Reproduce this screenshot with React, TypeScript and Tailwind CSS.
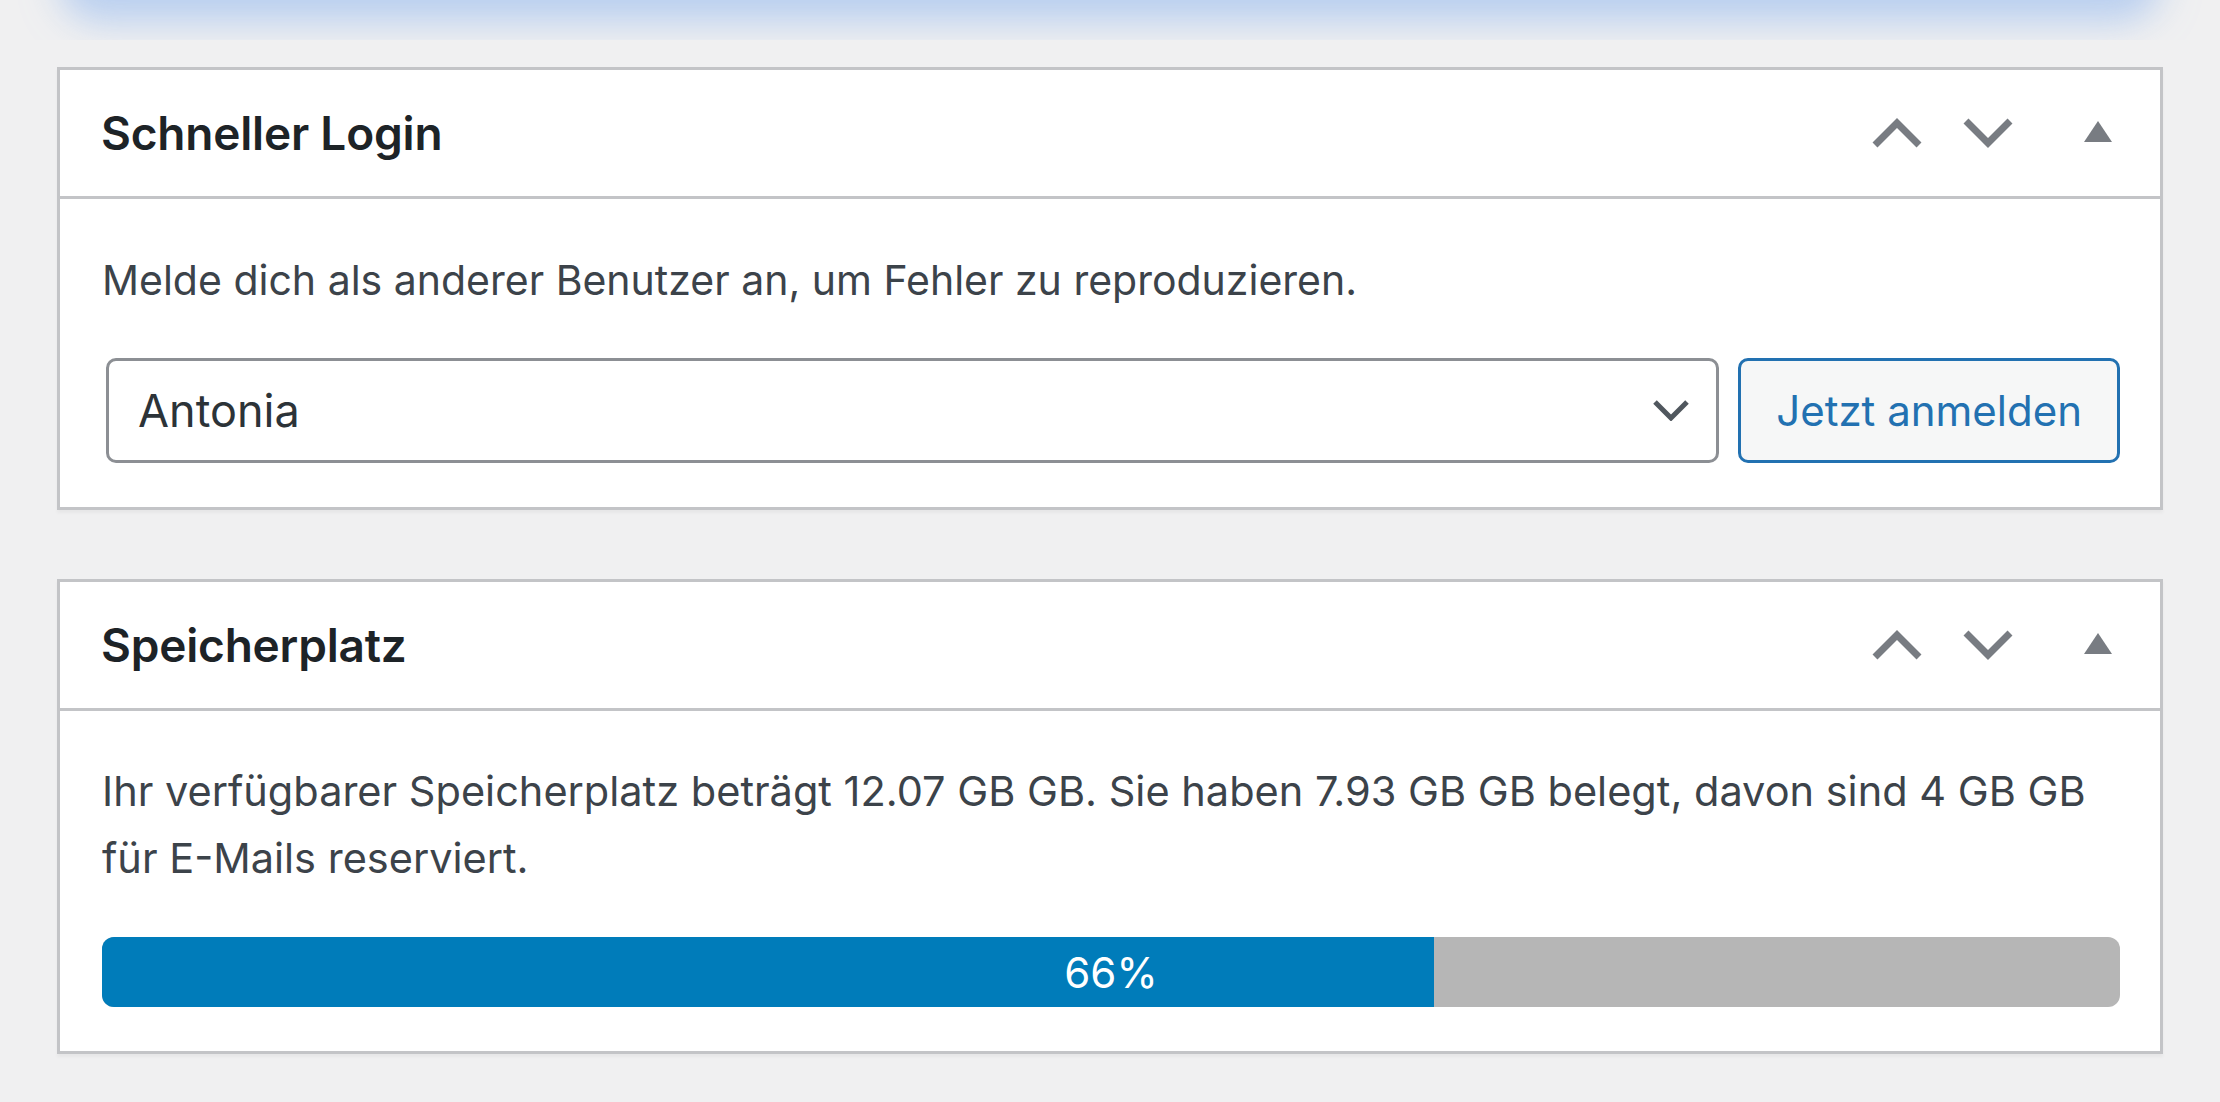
import type { ReactNode } from 'react';

const ChevronUp = () => (
  <svg width="50" height="30" viewBox="0 0 50 30" className="block">
    <polyline points="3,27 25,5 47,27" fill="none" stroke="#787c82" strokeWidth="7" />
  </svg>
);

const ChevronDown = () => (
  <svg width="50" height="30" viewBox="0 0 50 30" className="block">
    <polyline points="3,3 25,25 47,3" fill="none" stroke="#787c82" strokeWidth="7" />
  </svg>
);

const Triangle = () => (
  <svg width="28" height="21" viewBox="0 0 28 21" className="block -mt-[4px]">
    <polygon points="14,0 28,21 0,21" fill="#787c82" />
  </svg>
);

const Postbox = ({ title, children, className = '' }: { title: string; children: ReactNode; className?: string }) => (
  <div className={`mx-[57px] border-[3px] border-[#c3c4c7] bg-white shadow-[0_3px_3px_rgba(0,0,0,0.04)] ${className}`}>
    {/* Header */}
    <div className="flex h-[129px] items-center justify-between border-b-[3px] border-[#c3c4c7] pl-[41px] pr-[48px]">
      <h2 className="text-[46px] font-semibold tracking-[-0.2px] text-[#1d2327]">{title}</h2>
      <div className="flex items-center">
        <button className="p-0"><ChevronUp /></button>
        <button className="ml-[41px] p-0"><ChevronDown /></button>
        <button className="ml-[71px] p-0"><Triangle /></button>
      </div>
    </div>
    <div className="pl-[42px] pr-[40px] pt-[47px] pb-[43px]">{children}</div>
  </div>
);

export default function App() {
  const used = 66;

  return (
    <div className="min-h-screen bg-[#f0f0f1] font-['Inter',sans-serif]">
      {/* glow of the box above */}
      <div className="h-[40px] overflow-hidden">
        <div className="mx-[80px] -mt-[40px] h-[40px] rounded-[30px] shadow-[0_0_36px_22px_rgba(140,180,238,0.55)]" />
      </div>

      <Postbox title="Schneller Login" className="mt-[27px]">
        <p className="text-[41px] leading-[68px] text-[#3c434a]">
          Melde dich als anderer Benutzer an, um Fehler zu reproduzieren.
        </p>
        <div className="mt-[44px] mb-[1px] flex gap-[19px]">
          <div className="ml-[4px] flex h-[105px] flex-1 items-center justify-between rounded-[10px] border-[3px] border-[#8c8f94] pl-[29px] pr-[27px] text-[45px] text-[#2c3338]">
            <span>Antonia</span>
            <svg width="36" height="21" viewBox="0 0 36 21">
              <polyline points="2,2 18,18 34,2" fill="none" stroke="#50575e" strokeWidth="5" />
            </svg>
          </div>
          <button className="h-[105px] rounded-[10px] border-[3px] border-[#2271b1] bg-[#f6f7f7] px-[35px] text-[42px] text-[#2271b1]">
            Jetzt anmelden
          </button>
        </div>
      </Postbox>

      <Postbox title="Speicherplatz" className="mt-[69px]">
        <p className="text-[41.5px] leading-[67px] text-[#3c434a]">
          Ihr verfügbarer Speicherplatz beträgt 12.07 GB GB. Sie haben 7.93 GB GB belegt, davon sind 4 GB GB für E-Mails reserviert.
        </p>
        <div className="relative mt-[45px] mb-[1px] flex h-[70px] overflow-hidden rounded-[12px] bg-[#b6b6b6]">
          <div className="h-full bg-[#007cba]" style={{ width: `${used}%` }} />
          <div className="absolute inset-0 flex items-center justify-center text-[42px] text-white">{used}%</div>
        </div>
      </Postbox>
    </div>
  );
}
